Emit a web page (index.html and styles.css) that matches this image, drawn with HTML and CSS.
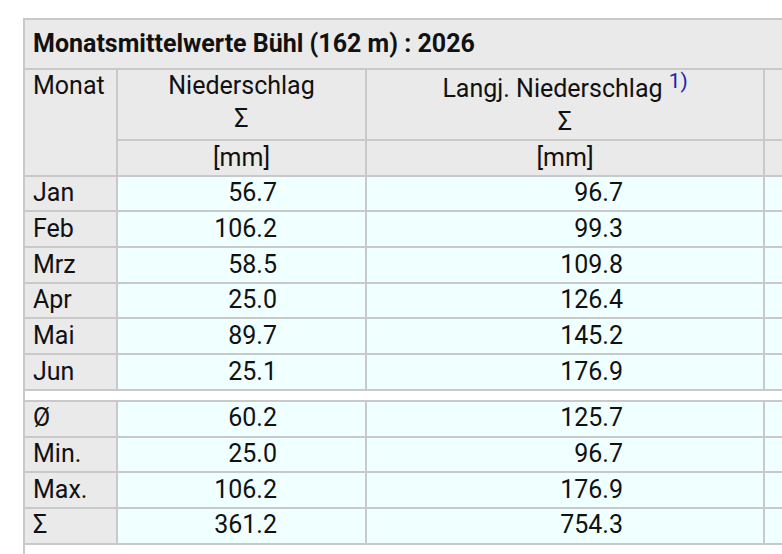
FILE: index.html
```html
<!DOCTYPE html>
<html lang="de">
<head>
<meta charset="utf-8">
<title>Monatsmittelwerte Bühl</title>
<link rel="stylesheet" href="styles.css">
</head>
<body>
<div class="page">
  <table class="climate">
    <colgroup>
      <col class="c-month">
      <col class="c-rain">
      <col class="c-long">
      <col class="c-extra">
    </colgroup>
    <thead>
      <tr><th colspan="4" class="title">Monatsmittelwerte Bühl (162 m) : 2026</th></tr>
      <tr>
        <th rowspan="2" class="h-month">Monat</th>
        <th class="h-val">Niederschlag<br>Σ</th>
        <th class="h-val">Langj. Niederschlag <sup><a class="fn" href="#fn1">1)</a></sup><br>Σ</th>
        <th class="h-val"></th>
      </tr>
      <tr>
        <th class="h-unit">[mm]</th>
        <th class="h-unit">[mm]</th>
        <th class="h-unit"></th>
      </tr>
    </thead>
    <tbody>
      <tr><td class="label">Jan</td><td class="rain">56.7</td><td class="long">96.7</td><td class="extra"></td></tr>
      <tr><td class="label">Feb</td><td class="rain">106.2</td><td class="long">99.3</td><td class="extra"></td></tr>
      <tr><td class="label">Mrz</td><td class="rain">58.5</td><td class="long">109.8</td><td class="extra"></td></tr>
      <tr><td class="label">Apr</td><td class="rain">25.0</td><td class="long">126.4</td><td class="extra"></td></tr>
      <tr><td class="label">Mai</td><td class="rain">89.7</td><td class="long">145.2</td><td class="extra"></td></tr>
      <tr><td class="label">Jun</td><td class="rain">25.1</td><td class="long">176.9</td><td class="extra"></td></tr>
      <tr class="gap"><td colspan="4"><div class="gap-fill"></div></td></tr>
      <tr><td class="label">Ø</td><td class="rain">60.2</td><td class="long">125.7</td><td class="extra"></td></tr>
      <tr><td class="label">Min.</td><td class="rain">25.0</td><td class="long">96.7</td><td class="extra"></td></tr>
      <tr><td class="label">Max.</td><td class="rain">106.2</td><td class="long">176.9</td><td class="extra"></td></tr>
      <tr><td class="label">Σ</td><td class="rain">361.2</td><td class="long">754.3</td><td class="extra"></td></tr>
    </tbody>
    <tfoot>
      <tr><td colspan="4" class="foot" id="fn1"></td></tr>
    </tfoot>
  </table>
</div>
</body>
</html>
```

FILE: styles.css
```css
html, body {
  margin: 0;
  overflow: hidden;
  background: #ffffff;
}

body {
  font-family: Roboto, "Noto Sans", "Liberation Sans", sans-serif;
  font-size: 25px;
  line-height: 1.3;
  color: #111111;
}

.page {
  padding: 18px 0 0 23px;
}

.climate {
  border-collapse: separate;
  border-spacing: 0;
  table-layout: fixed;
  width: 1042px;
  border-left: 2px solid #c9c9c9;
  border-top: 2px solid #c9c9c9;
}

.c-month { width: 93px; }
.c-rain  { width: 249px; }
.c-long  { width: 398px; }
.c-extra { width: 300px; }

.climate th,
.climate td {
  border-right: 2px solid #c9c9c9;
  border-bottom: 2px solid #c9c9c9;
  padding: 0.6px 8px;
  font-weight: 400;
}

.climate thead th {
  background: #eaeaea;
  vertical-align: top;
  text-align: center;
}

.climate thead th.title {
  text-align: left;
  font-weight: 700;
  padding: 7.5px 8px;
}

.climate thead th.h-month {
  text-align: left;
}

.climate tbody td {
  background: #f0ffff;
  text-align: right;
  vertical-align: middle;
  white-space: nowrap;
}

.climate tbody td.label {
  background: #eaeaea;
  text-align: left;
}

.climate tbody td.rain {
  padding-right: 88px;
}

.climate tbody td.long {
  padding-right: 140px;
}

.climate tbody tr.gap td {
  background: #ffffff;
  padding: 0;
  border-right: none;
}

.gap-fill {
  height: 9px;
}

sup {
  font-size: 0.83em;
  line-height: 1.1;
}

.fn {
  color: #2222b0;
  text-decoration: none;
}

.climate tfoot td.foot {
  background: #ffffff;
  border-right: none;
  border-bottom: none;
  height: 40px;
  padding: 0;
}
```
